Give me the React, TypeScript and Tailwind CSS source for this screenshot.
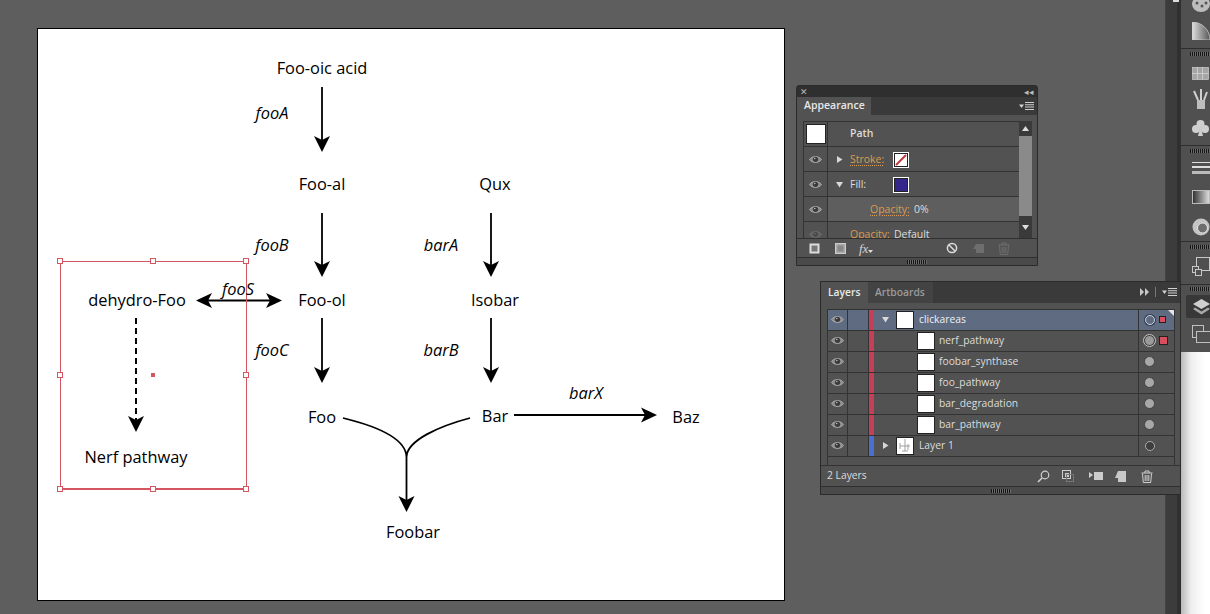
import type { ReactNode } from 'react';

const UI_FONT = 'font-["Open_Sans",sans-serif]';

// diagram labels, positions are relative to the artboard
const LABELS = [
  { text: 'Foo-oic acid', pos: 'left-[285px] top-[40px]' },
  { text: 'fooA', pos: 'left-[235px] top-[85px]', italic: true },
  { text: 'Foo-al', pos: 'left-[285px] top-[156px]' },
  { text: 'Qux', pos: 'left-[458px] top-[156px]' },
  { text: 'fooB', pos: 'left-[235px] top-[217px]', italic: true },
  { text: 'barA', pos: 'left-[404px] top-[217px]', italic: true },
  { text: 'dehydro-Foo', pos: 'left-[100px] top-[272px]' },
  { text: 'fooS', pos: 'left-[201px] top-[261px]', italic: true },
  { text: 'Foo-ol', pos: 'left-[285px] top-[272px]' },
  { text: 'Isobar', pos: 'left-[458px] top-[272px]' },
  { text: 'fooC', pos: 'left-[235px] top-[322px]', italic: true },
  { text: 'barB', pos: 'left-[404px] top-[322px]', italic: true },
  { text: 'Foo', pos: 'left-[285px] top-[389px]' },
  { text: 'Bar', pos: 'left-[458px] top-[388px]' },
  { text: 'barX', pos: 'left-[549px] top-[365px]', italic: true },
  { text: 'Baz', pos: 'left-[649px] top-[389px]' },
  { text: 'Nerf pathway', pos: 'left-[99px] top-[429px]' },
  { text: 'Foobar', pos: 'left-[376px] top-[504px]' },
];

const HANDLES = [
  [60, 261], [153, 261], [246, 261],
  [60, 375], [246, 375],
  [60, 489], [153, 489], [246, 489],
];

function Down({ x, y }: { x: number; y: number }) {
  // y is the tip of the arrow
  return <path d={`M${x} ${y}L${x - 8} ${y - 16}L${x} ${y - 12}L${x + 8} ${y - 16}Z`} fill="#000" />;
}

function DiagramLines() {
  return (
    <svg className="absolute inset-0" width="748" height="573" viewBox="37 28 748 573" fill="none">
      <g stroke="#000" strokeWidth="1.8">
        <path d="M322 87V142M322 213V267M322 318V373M491 213V267M491 318V373" />
        <path d="M205 300.5H272M406.5 457V502" />
        <path d="M343 418C380 427 406 440 406.5 457M470 418C440 426 407 440 406.5 457" />
        <path d="M514 415H648" />
        <path d="M136 318V421" strokeWidth="2" strokeDasharray="6 4" />
      </g>
      <Down x={322} y={152} />
      <Down x={322} y={277} />
      <Down x={322} y={383} />
      <Down x={491} y={277} />
      <Down x={491} y={383} />
      <Down x={136} y={432} />
      <Down x={406.5} y={512} />
      <path d="M196 300.5L212 293L208 300.5L212 308Z" fill="#000" />
      <path d="M282 300.5L266 293L270 300.5L266 308Z" fill="#000" />
      <path d="M657 415L641 407.5L645 415L641 422.5Z" fill="#000" />
      <path d="M60.5 261.5H246.5V489H60.5Z" stroke="#d2555f" strokeWidth="1" />
      <path d="M60.5 489H246.5" stroke="#d2555f" strokeWidth="2" />
      {HANDLES.map(([x, y]) => (
        <rect key={`${x}-${y}`} x={x - 2.5} y={y - 2.5} width="5" height="5" fill="#fff" stroke="#d2555f" />
      ))}
      <rect x="151" y="373" width="4" height="4" fill="#d2555f" />
    </svg>
  );
}

function Artboard() {
  return (
    <div className='relative h-[573px] w-[748px] bg-white font-["Open_Sans",sans-serif] text-[16.4px] text-black shadow-[inset_0_0_0_1px_#000]'>
      <DiagramLines />
      {LABELS.map((l) => (
        <span
          key={l.text}
          className={`absolute -translate-x-1/2 -translate-y-1/2 whitespace-nowrap ${l.pos} ${l.italic ? 'italic' : ''}`}
        >
          {l.text}
        </span>
      ))}
    </div>
  );
}

function Eye({ dim }: { dim?: boolean }) {
  return (
    <svg width="13" height="9" viewBox="0 0 13 9" className={dim ? 'opacity-30' : ''}>
      <path d="M0.5 4.5C3 0.6 10 0.6 12.5 4.5C10 8.4 3 8.4 0.5 4.5Z" fill="#8d8d8d" stroke="#b5b5b5" strokeWidth="0.8" />
      <circle cx="6.5" cy="4.3" r="2.6" fill="#3a3a3a" />
      <circle cx="5.8" cy="3.5" r="0.7" fill="#ccc" />
    </svg>
  );
}

function Tri({ open }: { open?: boolean }) {
  return (
    <svg width="7" height="7" viewBox="0 0 7 7">
      <path d={open ? 'M0 1H7L3.5 6.5Z' : 'M1 0V7L6.5 3.5Z'} fill="#d8d8d8" />
    </svg>
  );
}

function MenuIcon() {
  return (
    <svg width="15" height="8" viewBox="0 0 15 8" fill="#d0d0d0">
      <path d="M0 2.5H5L2.5 6Z" />
      <path d="M6 0H15V1H6ZM6 2.3H15V3.3H6ZM6 4.6H15V5.6H6ZM6 6.9H15V7.9H6Z" />
    </svg>
  );
}

function Grip({ w = 20 }: { w?: number }) {
  return <div className="h-[4px] bg-[repeating-linear-gradient(90deg,#161616_0_1px,#6a6a6a_1px_2px)]" style={{ width: w }} />;
}

function Trash({ c = '#d0d0d0' }: { c?: string }) {
  return (
    <svg width="12" height="13" viewBox="0 0 12 13" fill="none" stroke={c} strokeWidth="1">
      <path d="M0.5 3H11.5M4 3V1H8V3M1.5 3.5L2.3 12.5H9.7L10.5 3.5M4.2 5V11M6 5V11M7.8 5V11" />
    </svg>
  );
}

function Swatch({ fill }: { fill: 'stroke' | 'fill' }) {
  return (
    <div className="box-border flex h-[16px] w-[16px] items-center justify-center border border-white bg-[#222] p-[1px]">
      {fill === 'fill' ? (
        <div className="h-full w-full bg-[#35268c]" />
      ) : (
        <svg className="h-full w-full bg-white" viewBox="0 0 12 12">
          <path d="M1 11L11 1" stroke="#c0393b" strokeWidth="2" />
        </svg>
      )}
    </div>
  );
}

function AppRow({ eye = true, dim, light, children }: { eye?: boolean; dim?: boolean; light?: boolean; children: ReactNode }) {
  return (
    <div className="box-border flex h-[25px] shrink-0 border-b border-[#333]">
      <div className="box-border flex w-[24px] shrink-0 items-center justify-center border-r border-[#333]">
        {eye && <Eye dim={dim} />}
      </div>
      <div className={`relative flex flex-1 items-center pt-[1px] ${light ? 'bg-[#5e5e5e]' : ''}`}>{children}</div>
    </div>
  );
}

const ORANGE = 'text-[#dc9a50] underline decoration-dotted underline-offset-2';

function AppearancePanel() {
  return (
    <div className={`absolute left-[796px] top-[85px] box-border flex h-[181px] w-[242px] flex-col rounded-t-[3px] border border-[#2b2b2b] bg-[#525252] text-[10.5px] text-[#dcdcdc] ${UI_FONT}`}>
      <div className="flex h-[11px] items-center justify-between bg-[#2f2f2f] px-[3px] text-[9px] leading-none text-[#bbb]">
        <span>✕</span>
        <span>◂◂</span>
      </div>
      <div className="flex h-[18px] items-center justify-between bg-[#3a3a3a] pr-[3px]">
        <div className="flex h-full w-[74px] items-center bg-[#525252] pl-[7px] font-semibold text-[#e8e8e8]">Appearance</div>
        <MenuIcon />
      </div>
      <div className="mx-[6px] mt-[6px] flex h-[117px] w-[229px]">
        <div className="flex h-full w-[216px] flex-col overflow-hidden border-t border-l border-[#333]">
          <div className="box-border flex h-[25px] shrink-0 items-center border-b border-[#333]">
            <div className="box-border flex h-full w-[24px] items-center justify-center border-r border-[#333]">
              <div className="h-[18px] w-[18px] bg-white ring-1 ring-[#222]" />
            </div>
            <span className="ml-[22px] font-semibold">Path</span>
          </div>
          <AppRow>
            <div className="flex w-[22px] justify-center"><Tri /></div>
            <span className={`w-[43px] ${ORANGE}`}>Stroke:</span>
            <Swatch fill="stroke" />
          </AppRow>
          <AppRow>
            <div className="flex w-[22px] justify-center"><Tri open /></div>
            <span className="w-[43px]">Fill:</span>
            <Swatch fill="fill" />
          </AppRow>
          <AppRow light>
            <span className={`ml-[42px] ${ORANGE}`}>Opacity:</span>
            <span className="ml-[4px]">0%</span>
          </AppRow>
          <AppRow dim>
            <span className={`ml-[22px] ${ORANGE}`}>Opacity:</span>
            <span className="ml-[4px]">Default</span>
          </AppRow>
        </div>
        <div className="flex h-full w-[13px] flex-col bg-[#3a3a3a]">
          <div className="flex h-[15px] items-center justify-center">
            <svg width="7" height="5"><path d="M0 5L3.5 0L7 5Z" fill="#ddd" /></svg>
          </div>
          <div className="h-[80px] bg-[#8a8a8a]" />
          <div className="flex flex-1 items-center justify-center">
            <svg width="7" height="5"><path d="M0 0L7 0L3.5 5Z" fill="#ddd" /></svg>
          </div>
        </div>
      </div>
      <div className="relative flex h-[19px] items-center border-t border-[#2f2f2f] pl-[12px]">
        <svg width="11" height="11" className="mr-[15px]"><rect x="1.5" y="1.5" width="8" height="8" fill="#777" stroke="#ddd" strokeWidth="2" /></svg>
        <svg width="11" height="11" className="mr-[13px]"><rect x="0.5" y="0.5" width="10" height="10" fill="#aaa" stroke="#ccc" /><rect x="2.5" y="2.5" width="6" height="6" fill="#888" /></svg>
        <span className="font-['Liberation_Serif',serif] text-[13px] italic leading-none text-[#d5d5d5]">fx</span>
        <svg width="5" height="3" className="mt-[7px]"><path d="M0 0H5L2.5 3Z" fill="#ddd" /></svg>
        <svg width="12" height="12" viewBox="0 0 12 12" fill="none" stroke="#ddd" strokeWidth="1.5" className="ml-[73px]">
          <circle cx="6" cy="6" r="4.6" /><path d="M2.8 2.8L9.2 9.2" />
        </svg>
        <svg width="11" height="11" className="ml-[15px] opacity-40"><path d="M3 1H11V10H3V6H0Z" fill="#999" /></svg>
        <div className="ml-[14px] opacity-40"><Trash c="#999" /></div>
      </div>
      <div className="flex h-[8px] items-center justify-center border-t border-[#2f2f2f] bg-[#4a4a4a]"><Grip /></div>
    </div>
  );
}

type Layer = { name: string; top?: boolean; bar: string; open?: boolean; thumb?: boolean; target: 'ring' | 'double' | 'dot' | 'dark'; square?: 'small' | 'big'; selected?: boolean };

const LAYERS: Layer[] = [
  { name: 'clickareas', top: true, bar: 'bg-[#c43f58]', open: true, target: 'ring', square: 'small', selected: true },
  { name: 'nerf_pathway', bar: 'bg-[#c43f58]', target: 'double', square: 'big' },
  { name: 'foobar_synthase', bar: 'bg-[#c43f58]', target: 'dot' },
  { name: 'foo_pathway', bar: 'bg-[#c43f58]', target: 'dot' },
  { name: 'bar_degradation', bar: 'bg-[#c43f58]', target: 'dot' },
  { name: 'bar_pathway', bar: 'bg-[#c43f58]', target: 'dot' },
  { name: 'Layer 1', top: true, bar: 'bg-[#4a6fd0]', thumb: true, target: 'dark' },
];

function Target({ kind }: { kind: Layer['target'] }) {
  if (kind === 'double') {
    return <div className="flex h-[13px] w-[13px] items-center justify-center rounded-full border border-[#c8c8c8] bg-[#3f3f3f]"><div className="h-[9px] w-[9px] rounded-full bg-[#9a9a9a]" /></div>;
  }
  if (kind === 'dot') return <div className="h-[11px] w-[11px] rounded-full border border-[#444] bg-[#a8a8a8]" />;
  if (kind === 'ring') return <div className="h-[10px] w-[10px] rounded-full border border-[#cfd6e2] bg-[#5e6b80] ring-1 ring-[#2f3a4c]" />;
  return <div className="h-[10px] w-[10px] rounded-full border border-[#aaa] bg-[#3d3d3d]" />;
}

function LayerThumb({ diagram }: { diagram?: boolean }) {
  return (
    <div className="box-border h-[18px] w-[18px] shrink-0 border border-[#222] bg-white">
      {diagram && (
        <svg width="16" height="16" viewBox="0 0 16 16" fill="none" stroke="#8a8a8a" strokeWidth="0.8">
          <path d="M8 1V13M3 8H13M3 5V11M11 6V12M5 13H11" />
        </svg>
      )}
    </div>
  );
}

function LayerRow({ l }: { l: Layer }) {
  return (
    <div className={`relative box-border flex h-[21px] border-b border-[#333] ${l.selected ? 'bg-[#5f6b80]' : ''}`}>
      <div className="box-border flex w-[20px] items-center justify-center border-r border-[#333]"><Eye /></div>
      <div className="box-border w-[21px] border-r border-[#333]" />
      <div className={`w-[5px] ${l.bar}`} />
      {l.top ? (
        <div className="flex w-[22px] items-center justify-center"><Tri open={l.open} /></div>
      ) : (
        <div className="w-[43px]" />
      )}
      <div className="flex items-center"><LayerThumb diagram={l.thumb} /></div>
      <div className={`flex flex-1 items-center ${l.top ? 'ml-[5px]' : 'ml-[4px]'} ${l.selected ? 'text-[#eef1f5]' : ''}`}>{l.name}</div>
      <div className="box-border flex w-[36px] items-center border-l border-[#333] pl-[3px]">
        <div className="flex w-[15px] justify-center"><Target kind={l.target} /></div>
        {l.square && (
          <div className={`ml-[2px] border border-[#222] bg-[#d8505f] ${l.square === 'big' ? 'h-[9px] w-[9px]' : 'h-[7px] w-[7px]'}`} />
        )}
      </div>
      {l.selected && <div className="absolute right-0 top-0 h-0 w-0 border-l-[6px] border-t-[6px] border-l-transparent border-t-[#e8e8e8]" />}
    </div>
  );
}

function LayersPanel() {
  return (
    <div className={`absolute left-[820px] top-[281px] box-border flex h-[214px] w-[361px] flex-col border border-[#2b2b2b] bg-[#525252] text-[10.3px] text-[#dcdcdc] ${UI_FONT}`}>
      <div className="flex h-[21px] items-center justify-between bg-[#3a3a3a] pr-[3px]">
        <div className="flex h-full">
          <div className="flex h-full w-[47px] items-center bg-[#525252] pl-[7px] font-semibold text-[#e8e8e8]">Layers</div>
          <div className="flex h-full w-[65px] items-center bg-[#434343] pl-[7px] font-semibold text-[#9a9a9a]">Artboards</div>
        </div>
        <div className="flex items-center gap-[6px]">
          <svg width="9" height="8"><path d="M0 0L4 4L0 8ZM5 0L9 4L5 8Z" fill="#c8c8c8" /></svg>
          <div className="h-[10px] w-px bg-[#777]" />
          <MenuIcon />
        </div>
      </div>
      <div className="mx-[6px] mt-[6px] box-border flex h-[157px] w-[348px] flex-col border-x border-[#333]">
        <div className="border-t border-[#333]" />
        {LAYERS.map((l) => <LayerRow key={l.name} l={l} />)}
      </div>
      <div className="relative flex h-[21px] items-center border-t border-[#333] pl-[6px]">
        <span className="w-[210px]">2 Layers</span>
        <svg width="13" height="13" viewBox="0 0 13 13" fill="none" stroke="#d0d0d0" strokeWidth="1.2"><circle cx="8" cy="5" r="3.8" /><path d="M5 8L1 12" strokeWidth="1.6" /></svg>
        <svg width="12" height="12" className="ml-[12px]"><rect x="0.5" y="0.5" width="8" height="8" fill="none" stroke="#ccc" /><rect x="3" y="3" width="4" height="4" fill="#ccc" /><rect x="4.5" y="4.5" width="7" height="7" fill="none" stroke="#777" /></svg>
        <svg width="14" height="10" className="ml-[15px]"><path d="M0 1L4 4L0 7ZM5 1H14V9H5Z" fill="#ccc" /></svg>
        <svg width="11" height="11" className="ml-[12px]"><path d="M3 0H11V11H3V7H0Z" fill="#c8c8c8" /></svg>
        <div className="ml-[15px]"><Trash /></div>
      </div>
      <div className="flex h-[8px] items-center justify-center border-t border-[#2f2f2f] bg-[#4a4a4a]"><Grip /></div>
    </div>
  );
}

function DockSection({ h, gripGap, children }: { h: string; gripGap?: string; children: ReactNode }) {
  return (
    <div className={`box-border flex flex-col border-b border-[#2e2e2e] pl-[11px] ${h}`}>
      {gripGap && <div className={`-ml-[2px] mt-[3px] ${gripGap}`}><Grip w={24} /></div>}
      {children}
    </div>
  );
}

function DockColumn() {
  return (
    <div className="flex h-full w-[29px] shrink-0 flex-col overflow-hidden bg-[#505050]">
      <DockSection h="h-[49px]">
        <svg width="18" height="12" className="mb-[10px]"><ellipse cx="9" cy="4" rx="9" ry="8" fill="#bdbdbd" /><circle cx="5" cy="3" r="1.5" fill="#555" /><circle cx="10" cy="6" r="1.5" fill="#555" /><circle cx="14" cy="3" r="1.5" fill="#555" /></svg>
        <svg width="18" height="18" viewBox="0 0 18 18">
          <defs><linearGradient id="gs" x1="0" x2="1"><stop offset="0" stopColor="#e0e0e0" /><stop offset="1" stopColor="#555" /></linearGradient></defs>
          <path d="M0 0C10 0 18 8 18 18H0Z" fill="url(#gs)" stroke="#ccc" strokeWidth="0.8" />
        </svg>
      </DockSection>
      <DockSection h="h-[97px]" gripGap="mb-[11px]">
        <svg width="17" height="13" className="mb-[8px]" fill="#a5a5a5" stroke="#ddd" strokeWidth="0.6"><rect x="0.5" y="0.5" width="5" height="6" /><rect x="5.5" y="0.5" width="5" height="6" /><rect x="10.5" y="0.5" width="6" height="6" /><rect x="0.5" y="6.5" width="5" height="6" /><rect x="5.5" y="6.5" width="5" height="6" /><rect x="10.5" y="6.5" width="6" height="6" /></svg>
        <svg width="17" height="22" viewBox="0 0 17 20" className="mb-[10px]"><path d="M5 11H13V20H5Z" fill="#bdbdbd" /><path d="M6 11L2 2M9 11V0M12 11L15 3" stroke="#d0d0d0" strokeWidth="2" /></svg>
        <svg width="17" height="16" viewBox="0 0 17 16" fill="#cfcfcf"><circle cx="8.5" cy="4" r="4" /><circle cx="4" cy="9" r="4" /><circle cx="13" cy="9" r="4" /><path d="M8 8H9L11 16H6Z" /></svg>
      </DockSection>
      <DockSection h="h-[96px]" gripGap="mb-[9px]">
        <div className="mb-[16px] flex flex-col gap-[3px]">
          <div className="h-px w-[18px] bg-[#ddd]" />
          <div className="h-[2px] w-[18px] bg-[#ddd]" />
          <div className="h-[3px] w-[18px] bg-[#bbb]" />
        </div>
        <div className="mb-[14px] h-[14px] w-[18px] border border-[#bbb] bg-[linear-gradient(90deg,#333,#ddd)]" />
        <svg width="18" height="18" viewBox="0 0 18 18"><circle cx="9" cy="9" r="8.5" fill="#c4c4c4" /><circle cx="10.5" cy="10" r="5" fill="#6e6e6e" stroke="#e4e4e4" /></svg>
      </DockSection>
      <DockSection h="h-[43px]" gripGap="mb-[8px]">
        <svg width="18" height="20" viewBox="0 0 18 20" fill="none" stroke="#c8c8c8"><rect x="4.5" y="0.5" width="13" height="13" /><rect x="0.5" y="9.5" width="6" height="6" fill="#505050" /><rect x="3.5" y="12.5" width="6" height="6" fill="#505050" /></svg>
      </DockSection>
      <div className="box-border flex h-[67px] flex-col">
        <div className="mb-[4px] ml-[9px] mt-[2px]"><Grip w={20} /></div>
        <div className="ml-[5px] flex h-[23px] items-center rounded-l-[2px] bg-[#383838] pl-[7px]">
          <svg width="17" height="16" viewBox="0 0 17 16"><path d="M8.5 0L17 5L8.5 10L0 5Z" fill="#d0d0d0" /><path d="M2 8.5L8.5 12.5L15 8.5L17 10L8.5 15.5L0 10Z" fill="#a8a8a8" /></svg>
        </div>
        <svg width="18" height="19" viewBox="0 0 18 19" fill="none" stroke="#c0c0c0" className="ml-[11px] mt-[7px]"><rect x="0.5" y="0.5" width="11" height="12" /><rect x="4.5" y="6.5" width="14" height="11" fill="#505050" /></svg>
      </div>
      <div className="flex-1 bg-[linear-gradient(90deg,#b9b9b9,#eeeeee_10px,#ffffff_24px)]" />
    </div>
  );
}

export default function App() {
  return (
    <div className="relative flex h-[614px] w-[1210px] overflow-hidden bg-[#5e5e5e]">
      <div className="w-[1165px] shrink-0 pl-[37px] pt-[28px]">
        <Artboard />
      </div>
      <div className="relative flex h-full w-[16px] shrink-0 border-l border-[#444] bg-[#3c3c3c]">
        <div className="absolute left-[7px] top-0 h-[2px] w-[6px] bg-[#ddd]" />
        <div className="ml-auto w-[4px] bg-[#303030]" />
      </div>
      <DockColumn />
      <AppearancePanel />
      <LayersPanel />
    </div>
  );
}
